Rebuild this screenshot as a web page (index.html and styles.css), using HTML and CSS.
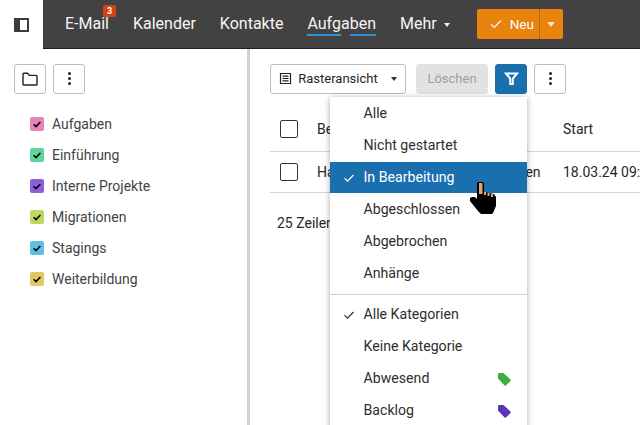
FILE: index.html
```html
<!DOCTYPE html>
<html lang="de">
<head>
<meta charset="utf-8">
<title>Aufgaben</title>
<link rel="stylesheet" href="styles.css">
</head>
<body>
<header class="topbar">
  <button class="side-toggle" aria-label="Seitenleiste">
    <svg width="16" height="16" viewBox="0 0 16 16"><path fill="#3d3d3d" fill-rule="evenodd" d="M0 1h15v14H0zM6 3v10h7V3z"/></svg>
  </button>
  <nav class="nav">
    <a class="nav-item badge-host">E-Mail<span class="badge">3</span></a>
    <a class="nav-item">Kalender</a>
    <a class="nav-item">Kontakte</a>
    <a class="nav-item active"><span class="u">Aufg</span><span>a</span><span class="u">ben</span></a>
    <a class="nav-item">Mehr<span class="caret caret-light"></span></a>
    <div class="split">
      <button class="split-main">
        <svg width="12" height="10" viewBox="0 0 12 10"><path fill="none" stroke="#fff" stroke-width="1.1" d="M1 5.2l3.2 3.2L11 1.5"/></svg>
        <span>Neu</span>
      </button>
      <button class="split-caret" aria-label="Mehr"><span class="caret caret-big"></span></button>
    </div>
  </nav>
</header>
<div class="body">
  <aside class="sidebar">
    <div class="tools">
      <button class="btn square">
        <svg width="16" height="14" viewBox="0 0 16 14"><path fill="none" stroke="#222" stroke-width="1.4" d="M1 3V12.2a.8.8 0 0 0 .8.8H14.2a.8.8 0 0 0 .8-.8V4.2a.8.8 0 0 0-.8-.8H7.2L5.6 1.2H1.8A.8.8 0 0 0 1 2z"/></svg>
      </button>
      <button class="btn square"><span class="dots"><i></i><i></i><i></i></span></button>
    </div>
    <ul class="folders">
      <li><span class="cb c-pink"><svg viewBox="0 0 14 14"><path d="M3.6 7.2l2.4 2.4 4.4-4.6"/></svg></span>Aufgaben</li>
      <li><span class="cb c-green"><svg viewBox="0 0 14 14"><path d="M3.6 7.2l2.4 2.4 4.4-4.6"/></svg></span>Einführung</li>
      <li><span class="cb c-purple"><svg viewBox="0 0 14 14"><path d="M3.6 7.2l2.4 2.4 4.4-4.6"/></svg></span>Interne Projekte</li>
      <li><span class="cb c-lime"><svg viewBox="0 0 14 14"><path d="M3.6 7.2l2.4 2.4 4.4-4.6"/></svg></span>Migrationen</li>
      <li><span class="cb c-blue"><svg viewBox="0 0 14 14"><path d="M3.6 7.2l2.4 2.4 4.4-4.6"/></svg></span>Stagings</li>
      <li><span class="cb c-yellow"><svg viewBox="0 0 14 14"><path d="M3.6 7.2l2.4 2.4 4.4-4.6"/></svg></span>Weiterbildung</li>
    </ul>
  </aside>
  <main class="main">
    <div class="toolbar">
      <button class="btn view">
        <svg width="13" height="13" viewBox="0 0 13 13"><path fill="none" stroke="#222" stroke-width="1.2" d="M1.500 1.500h10v10h-10zM3.500 4.200h6M3.500 6.500h6M3.500 8.800h6"/></svg>
        <span>Rasteransicht</span><span class="caret"></span>
      </button>
      <button class="btn delete">Löschen</button>
      <button class="btn filter">
        <svg width="15" height="15" viewBox="0 0 15 15"><path fill="none" stroke="#fff" stroke-width="2" d="M2 2.500h11L8.800 7.500V13H6.200V7.500z"/></svg>
      </button>
      <button class="btn square"><span class="dots"><i></i><i></i><i></i></span></button>
    </div>
    <div class="table">
      <div class="row head">
        <span class="box"></span><span class="col-title">Betreff</span><span class="col-start">Start</span>
      </div>
      <div class="row">
        <span class="box"></span><span class="col-title">Hausaufgaben für neue Migrationen</span><span class="col-start">18.03.24 09:00</span>
      </div>
    </div>
    <p class="count">25 Zeilen</p>
  </main>
</div>
<div class="menu">
  <div class="mi">Alle</div>
  <div class="mi">Nicht gestartet</div>
  <div class="mi selected"><svg class="tick" viewBox="0 0 12 10"><path d="M1.500 5.200l3 3L10.500 2"/></svg>In Bearbeitung</div>
  <div class="mi">Abgeschlossen</div>
  <div class="mi">Abgebrochen</div>
  <div class="mi">Anhänge</div>
  <div class="sep"></div>
  <div class="mi"><svg class="tick" viewBox="0 0 12 10"><path d="M1.500 5.200l3 3L10.500 2"/></svg>Alle Kategorien</div>
  <div class="mi">Keine Kategorie</div>
  <div class="mi">Abwesend<svg class="tag" viewBox="0 0 14 14"><path fill="#3fae3c" d="M1 2.200A1.200 1.200 0 0 1 2.200 1H6.500L13.500 7.500a1 1 0 0 1 0 1.400L9 13.500a1 1 0 0 1-1.400 0L1 6.500z"/></svg></div>
  <div class="mi">Backlog<svg class="tag" viewBox="0 0 14 14"><path fill="#5b35b5" d="M1 2.200A1.200 1.200 0 0 1 2.200 1H6.500L13.500 7.500a1 1 0 0 1 0 1.400L9 13.500a1 1 0 0 1-1.400 0L1 6.500z"/></svg></div>
</div>
<svg class="hand" width="30" height="34" viewBox="0 0 30 34">
  <path fill="#000" d="M9 2l1-1h5l1 1v9l10 2 2 3v9l-3 7-1 1H13l-3-3-8-10v-3l2-1h3l2 2z"/>
  <path fill="#e8a26a" d="M11 2h3.500v11H11zM16 11h2v3h-2zM19.500 12h2v3h-2zM23 13h2v3h-2z"/>
</svg>
</body>
</html>
```
FILE: styles.css
```css
* { box-sizing: border-box; }
html, body { height: 100%; }
body {
  margin: 0;
  overflow: hidden;
  background: #fff;
  color: #262626;
  font-family: Roboto, "Liberation Sans", sans-serif;
  font-size: 14px;
  display: flex;
  flex-direction: column;
}
button { font: inherit; color: inherit; background: none; border: 0; padding: 0; }

.topbar { display: flex; height: 49px; flex: none; }
.side-toggle { width: 43px; display: flex; align-items: center; justify-content: center; }
.nav {
  flex: 1;
  display: flex;
  align-items: center;
  background: #424242;
  border-bottom: 1px solid #1f1f1f;
  padding-left: 22px;
  gap: 24px;
}
.nav-item { color: #f5f5f5; font-size: 16px; position: relative; white-space: nowrap; line-height: 20px; }
.active .u { border-bottom: 2px solid #2a93d8; padding-bottom: 1px; }
.badge {
  position: absolute;
  left: 38px;
  top: -9px;
  width: 13px;
  height: 12px;
  background: #d8401a;
  border-radius: 2px;
  color: #fff;
  font-size: 9px;
  font-weight: 700;
  line-height: 12px;
  text-align: center;
}
.caret {
  display: inline-block;
  width: 0;
  height: 0;
  border: 3.5px solid transparent;
  border-top: 4px solid #333;
  border-bottom: 0;
  margin-left: 7px;
  vertical-align: middle;
}
.caret-light { border-top-color: #f0f0f0; }
.caret-big { border-width: 5px 4.5px 0; border-top-color: #fbe3c4; border-left-color: transparent; border-right-color: transparent; margin: 0; }
.split { display: flex; height: 30px; margin-left: 3px; color: #fff; font-size: 13.5px; background: #e8830e; border-radius: 2px; }
.split-main { width: 63px; display: flex; align-items: center; gap: 8px; padding-left: 13px; color: #fff; border-right: 1px solid #b96809; }
.split-caret { width: 23px; display: flex; align-items: center; justify-content: center; }

.body { flex: 1; display: flex; min-height: 0; }
.sidebar { width: 250px; flex: none; border-right: 3px solid #d0d0d0; padding: 15px 14px 0; }
.tools { display: flex; gap: 7px; }
.btn {
  height: 30px;
  border: 1px solid #bdbdbd;
  border-radius: 3px;
  background: #fff;
  display: flex;
  align-items: center;
  justify-content: center;
  font-size: 13px;
  padding-bottom: 1px;
}
.square { width: 32px; }
.dots { display: flex; flex-direction: column; gap: 2px; }
.dots i { display: block; width: 3px; height: 3px; border-radius: 50%; background: #222; }
.folders { list-style: none; margin: 14px 0 0; padding: 0 0 0 16px; }
.folders li { height: 31px; display: flex; align-items: center; gap: 8px; font-size: 14px; color: #444; }
.cb { width: 14px; height: 14px; border-radius: 2px; display: block; }
.cb svg { display: block; width: 14px; height: 14px; fill: none; stroke: #000; stroke-width: 1.6; }
.c-pink { background: #e884b8; }
.c-green { background: #5fd49a; }
.c-purple { background: #8a5fd8; }
.c-lime { background: #bdd861; }
.c-blue { background: #5fbfe0; }
.c-yellow { background: #e0c964; }

.main { flex: 1; min-width: 0; padding: 15px 0 0 20px; overflow: hidden; }
.toolbar { display: flex; gap: 7px; }
.view { width: 136px; gap: 6px; }
.delete { width: 72px; margin-left: 3px; background: #e2e2e2; border-color: #e2e2e2; color: #9e9e9e; }
.filter { width: 32px; background: #1a6fae; border-color: #1a6fae; }
.table { margin-top: 12px; width: 420px; }
.row { height: 41px; border-bottom: 1px solid #d4d4d4; display: flex; align-items: center; padding-left: 10px; font-size: 14px; }
.head { height: 46px; }
.box { width: 18px; height: 18px; border: 1px solid #333; border-radius: 2px; flex: none; }
.col-title { margin-left: 19px; width: 246px; flex: none; white-space: nowrap; }
.col-start { white-space: nowrap; }
.count { margin: 22px 0 0 7px; font-size: 14px; }

.menu {
  position: absolute;
  left: 330px;
  top: 97px;
  width: 197px;
  height: 340px;
  background: #fff;
  box-shadow: 0 1px 6px rgba(0, 0, 0, .35);
  font-size: 14.15px;
  color: #2e2e2e;
}
.mi { height: 32px; display: flex; align-items: center; padding-left: 33.500px; position: relative; }
.selected { background: #1a6fae; color: #fff; border-top: 1px solid #fff; padding-bottom: 1px; }
.selected .tick { top: 11px; }
.sep { height: 1px; background: #d0d0d0; margin: 5px 0 3px; }
.tick { position: absolute; left: 13px; top: 12px; width: 12px; height: 10px; fill: none; stroke: currentColor; stroke-width: 1.2; }
.tag { position: absolute; left: 166.500px; top: 10px; width: 14px; height: 14px; }
.hand { position: absolute; left: 468px; top: 181px; }
```
